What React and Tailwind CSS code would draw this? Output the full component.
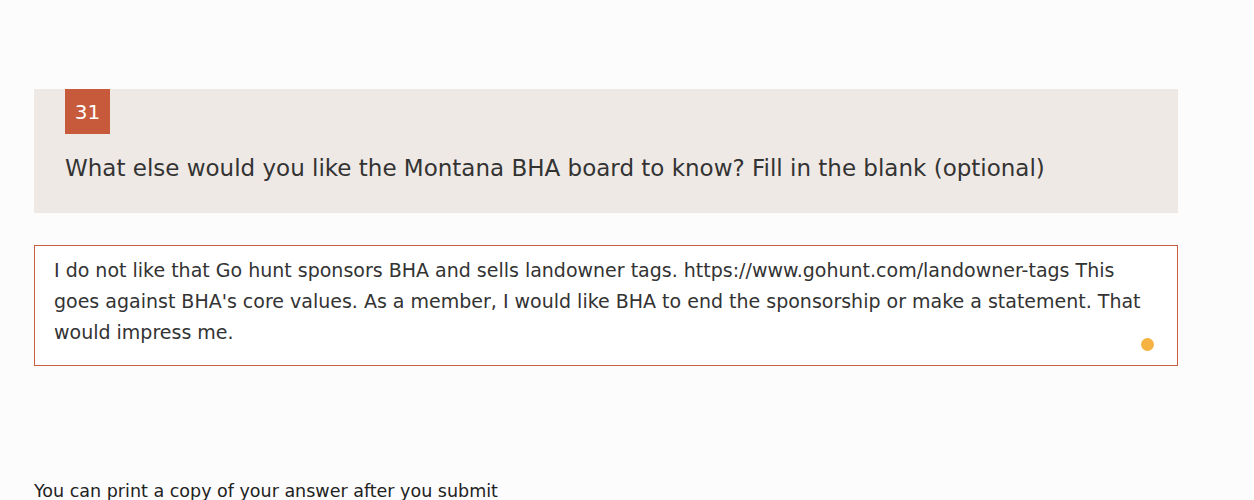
import React from "react";

export default function App() {
  const lines = [
    "I do not like that Go hunt sponsors BHA and sells landowner tags. https://www.gohunt.com/landowner-tags This",
    "goes against BHA's core values. As a member, I would like BHA to end the sponsorship or make a statement. That",
    "would impress me.",
  ];

  return (
    <div className="min-h-[500px] w-[1254px] bg-[#fdfcfc] overflow-hidden font-['DejaVu_Sans',sans-serif]">
      <div className="pl-[34px] pr-[76px] pt-[89px]">
        <div className="bg-[#efe9e6] h-[124px] pl-[31px]">
          <div className="w-[45px] h-[45px] bg-[#c65a3a] text-white text-[20px] flex items-center justify-center">31</div>
          <div className="mt-[18px] text-[23px] leading-[32px] text-[#333333]">
            What else would you like the Montana BHA board to know? Fill in the blank (optional)
          </div>
        </div>

        <div className="mt-[32px] relative h-[121px] border border-[#cb5e41] bg-white px-[19px] pt-[9px]">
          <div className="text-[19px] leading-[31px] text-[#333333]">
            {lines.map((l, i) => (
              <div key={i} className="whitespace-nowrap">{l}</div>
            ))}
          </div>
          <span className="absolute right-[23px] bottom-[14px] w-[13px] h-[13px] rounded-full bg-[#f5b343]" />
        </div>

        <div className="mt-[113px] text-[17.5px] leading-[24px] text-[#222222]">
          You can print a copy of your answer after you submit
        </div>
      </div>
    </div>
  );
}
